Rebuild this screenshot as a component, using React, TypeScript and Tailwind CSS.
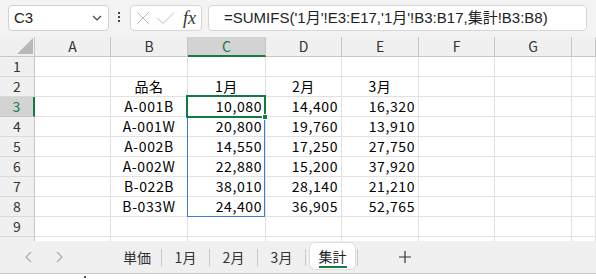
import React from "react";

const rows = [
  ["A-001B", "10,080", "14,400", "16,320"],
  ["A-001W", "20,800", "19,760", "13,910"],
  ["A-002B", "14,550", "17,250", "27,750"],
  ["A-002W", "22,880", "15,200", "37,920"],
  ["B-022B", "38,010", "28,140", "21,210"],
  ["B-033W", "24,400", "36,905", "52,765"],
];

const cols = ["A", "B", "C", "D", "E", "F", "G", ""];

const cellFont = { fontFamily: '"Noto Sans CJK JP", "Noto Sans", sans-serif' };

function Cell({
  children,
  align = "center",
}: {
  children?: React.ReactNode;
  align?: "center" | "right";
}) {
  return (
    <div
      className={
        "flex items-center border-r border-b border-[#e1e1e1] bg-white text-[14px] text-black tracking-[0.6px] " +
        (align === "right" ? "justify-end pr-[3px]" : "justify-center")
      }
    >
      {children}
    </div>
  );
}

function RowHead({ n, active }: { n: number; active?: boolean }) {
  return (
    <div
      className={
        "flex items-center justify-center border-b text-[14px] " +
        (active
          ? "bg-[#d3d3d3] text-[#107c41] border-r-2 border-r-[#107c41] border-b-[#c6c6c6]"
          : "bg-[#f0f0f0] text-[#333] border-r border-r-[#c6c6c6] border-b-[#dadada]")
      }
    >
      {n}
    </div>
  );
}

function Toolbar() {
  return (
    <div className="flex items-start h-[37px] bg-[#f3f3f3] pt-[5px] pl-[8px]">
      <div className="flex items-center justify-between w-[101px] h-[26px] bg-white border border-[#d1d1d1] rounded-[4px] pl-[5px] pr-[6px]">
        <span className="text-[15px] text-[#222]" style={{ fontFamily: '"Liberation Sans", sans-serif' }}>
          C3
        </span>
        <svg width="10" height="6" viewBox="0 0 10 6">
          <path d="M1 1 L5 5 L9 1" fill="none" stroke="#444" strokeWidth="1.2" />
        </svg>
      </div>
      <div className="flex flex-col gap-[2px] ml-[9px] mt-[7px]">
        <div className="w-[2px] h-[2px] bg-[#444]" />
        <div className="w-[2px] h-[2px] bg-[#444]" />
        <div className="w-[2px] h-[2px] bg-[#444]" />
      </div>
      <div className="relative flex items-center w-[72px] h-[26px] ml-[10px] bg-white border border-[#d6d6d6] rounded-[4px]">
        <svg className="ml-[5px]" width="14" height="14" viewBox="0 0 14 14">
          <path d="M1 1 L13 13 M13 1 L1 13" stroke="#bcbcbc" strokeWidth="1" fill="none" />
        </svg>
        <svg className="ml-[7px]" width="18" height="13" viewBox="0 0 18 13">
          <path d="M0.5 6 L6 11.5 L17 0.5" stroke="#bcbcbc" strokeWidth="1" fill="none" />
        </svg>
        <span
          className="ml-[8px] text-[18px] italic text-[#333] leading-none"
          style={{ fontFamily: '"Liberation Serif", serif' }}
        >
          fx
        </span>
      </div>
      <div className="flex items-center flex-1 h-[26px] ml-[6px] mr-[9px] bg-white border border-[#d6d6d6] rounded-[4px] pl-[15px]">
        <span
          className="text-[15px] text-[#222] whitespace-nowrap"
          style={{ fontFamily: '"Liberation Sans", "Noto Sans CJK JP", sans-serif' }}
        >
          =SUMIFS('1月'!E3:E17,'1月'!B3:B17,集計!B3:B8)
        </span>
      </div>
    </div>
  );
}

function Sheet() {
  return (
    <div className="relative h-[204px] overflow-hidden" style={cellFont}>
      <div className="grid grid-cols-[35px_76px_77px_78px_76px_77px_76px_77px_1fr] auto-rows-[20px]">
        <div className="relative bg-[#f0f0f0] border-r border-b border-[#c6c6c6]">
          <svg className="absolute right-[1px] bottom-[2px]" width="16" height="16" viewBox="0 0 16 16">
            <polygon points="16,0 16,16 0,16" fill="#b9b9b9" />
          </svg>
        </div>
        {cols.map((c, i) =>
          c === "C" ? (
            <div
              key={i}
              className="flex items-center justify-center bg-[#d3d3d3] text-[#107c41] text-[14px] border-r border-r-[#c6c6c6] border-b-2 border-b-[#107c41]"
            >
              {c}
            </div>
          ) : (
            <div
              key={i}
              className="flex items-center justify-center bg-[#f0f0f0] text-[#333] text-[14px] border-r border-b border-[#c6c6c6]"
            >
              {c}
            </div>
          )
        )}

        <RowHead n={1} />
        {cols.map((_, i) => (
          <Cell key={i} />
        ))}

        <RowHead n={2} />
        <Cell />
        <Cell>品名</Cell>
        <Cell>1月</Cell>
        <Cell>2月</Cell>
        <Cell>3月</Cell>
        <Cell />
        <Cell />
        <Cell />

        {rows.map((r, ri) => (
          <React.Fragment key={ri}>
            <RowHead n={ri + 3} active={ri === 0} />
            <Cell />
            <Cell>{r[0]}</Cell>
            <Cell align="right">{r[1]}</Cell>
            <Cell align="right">{r[2]}</Cell>
            <Cell align="right">{r[3]}</Cell>
            <Cell />
            <Cell />
            <Cell />
          </React.Fragment>
        ))}

        {[9, 10].map((n) => (
          <React.Fragment key={n}>
            <RowHead n={n} />
            {cols.map((_, i) => (
              <Cell key={i} />
            ))}
          </React.Fragment>
        ))}
      </div>

      <div className="absolute left-[187px] top-[80px] w-[78px] h-[100px] border border-[#3d7bd6]" />
      <div className="absolute left-[186px] top-[58px] w-[80px] h-[23px] border-2 border-[#107c41]" />
      <div className="absolute left-[262px] top-[77px] w-[6px] h-[6px] bg-[#107c41] border border-white" />
    </div>
  );
}

function Tabs() {
  const sep = <div className="w-px h-[17px] bg-[#c8c8c8]" />;
  const tab = (label: string, w: string) => (
    <div className={"flex items-center justify-center text-[14px] text-[#333] " + w}>{label}</div>
  );
  return (
    <div
      className="flex items-center h-[33px] bg-[#f0f0f0] border-b border-[#c8c8c8]"
      style={cellFont}
    >
      <div className="flex items-center w-[113px] h-full">
        <svg className="ml-[25px]" width="7" height="12" viewBox="0 0 7 12">
          <path d="M6 1 L1 6 L6 11" fill="none" stroke="#a6a6a6" strokeWidth="1.1" />
        </svg>
        <svg className="ml-[24px]" width="7" height="12" viewBox="0 0 7 12">
          <path d="M1 1 L6 6 L1 11" fill="none" stroke="#a6a6a6" strokeWidth="1.1" />
        </svg>
      </div>
      {tab("単価", "w-[48px]")}
      {sep}
      {tab("1月", "w-[47px]")}
      {sep}
      {tab("2月", "w-[47px]")}
      {sep}
      {tab("3月", "w-[47px]")}
      {sep}
      <div className="flex flex-col items-center self-start mt-[2px] ml-[4px] w-[45px] h-[26px] bg-white rounded-[5px] shadow-[0_0_0_1px_#dedede]">
        <span className="mt-[3px] text-[14px] text-[#222] leading-[20px]">集計</span>
        <div className="w-[28px] h-[2px] bg-[#107c41]" />
      </div>
      <div className="ml-[2px]">{sep}</div>
      <svg className="ml-[41px]" width="12" height="12" viewBox="0 0 12 12">
        <path d="M6 0 V12 M0 6 H12" stroke="#333" strokeWidth="1.2" fill="none" />
      </svg>
    </div>
  );
}

export default function App() {
  return (
    <div className="w-[596px] h-[279px] overflow-hidden bg-white">
      <Toolbar />
      <Sheet />
      <Tabs />
      <div className="relative h-[5px] bg-white">
        <div className="absolute left-[84px] top-[2px] w-[2px] h-[2px] bg-[#555]" />
      </div>
    </div>
  );
}
